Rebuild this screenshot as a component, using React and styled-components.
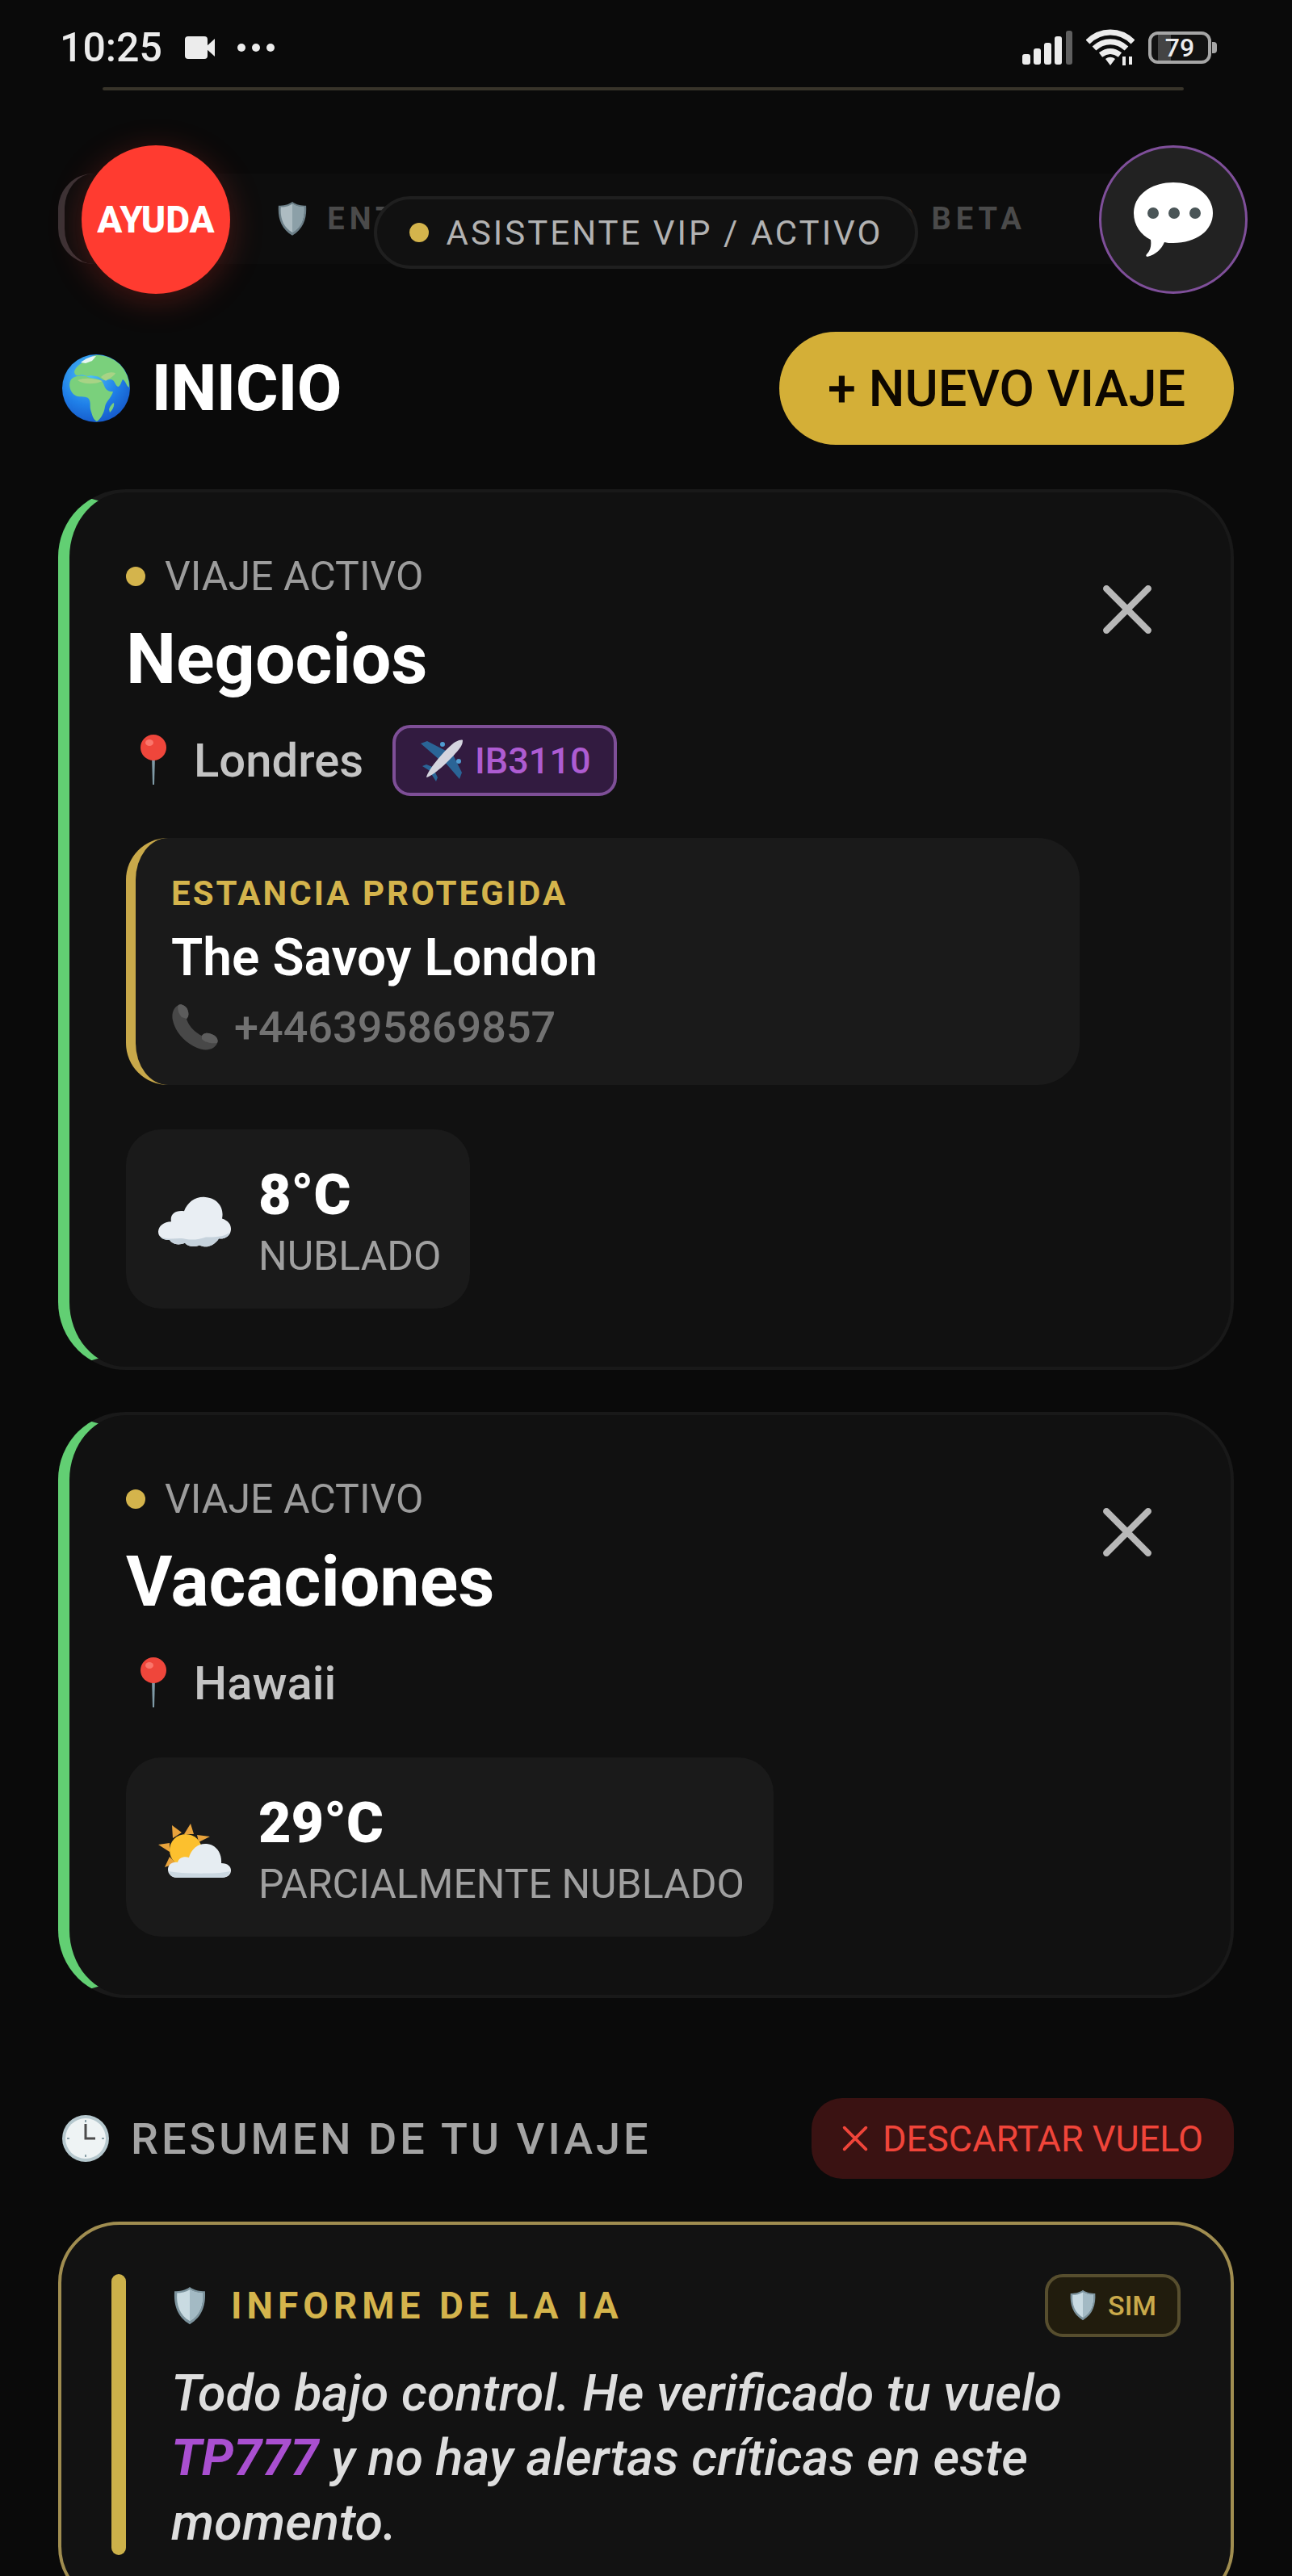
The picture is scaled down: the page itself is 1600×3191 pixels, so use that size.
import React from 'react'
import styled, { createGlobalStyle } from 'styled-components';

const GlobalStyle = createGlobalStyle`
  * {
    box-sizing: border-box;
  }
  body {
    margin: 0;
    background: #0a0a0a;
    color: #ffffff;
    font-family: Roboto, "Liberation Sans", sans-serif;
  }
  button {
    font-family: inherit;
    border: none;
    cursor: pointer;
  }
  h1, h2, h3, p {
    margin: 0;
  }
  svg {
    display: block;
    flex-shrink: 0;
  }
`;

const trips = [
  {
    name: 'Negocios',
    city: 'Londres',
    flight: 'IB3110',
    hotel: { name: 'The Savoy London', phone: '+446395869857' },
    weather: { temp: '8°C', label: 'NUBLADO', sunny: false },
  },
  {
    name: 'Vacaciones',
    city: 'Hawaii',
    weather: { temp: '29°C', label: 'PARCIALMENTE NUBLADO', sunny: true },
  },
];

const Page = styled.div`
  height: 100vh;
  overflow: hidden;
  background: #0a0a0a;
`;

const StatusBar = styled.div`
  display: flex;
  align-items: center;
  justify-content: space-between;
  height: 108px;
  padding: 10px 90px 0 74px;
`;

const StatusGroup = styled.div`
  display: flex;
  align-items: center;
  gap: ${({ $gap }) => $gap}px;
`;

const Clock = styled.span`
  font-size: 50px;
  font-weight: 500;
  line-height: 60px;
  color: #ececec;
`;

const ScrolledEdge = styled.div`
  height: 4px;
  margin: 0 134px 0 127px;
  border-radius: 2px;
  background: #38342a;
`;

const TopZone = styled.div`
  position: relative;
  height: 299px;
  padding: 103px 72px 0;
`;

const Banner = styled.div`
  display: flex;
  align-items: center;
  justify-content: center;
  gap: 24px;
  height: 112px;
  padding-left: 6px;
  border-left: 8px solid #3a3235;
  border-radius: 44px;
  background: #0d0d0d;
  color: #4a4a4a;
  font-size: 38px;
  font-weight: 700;
  letter-spacing: 6px;
  white-space: nowrap;
`;

const FloatingBar = styled.div`
  position: absolute;
  top: 68px;
  left: 0;
  right: 0;
  display: flex;
  justify-content: space-between;
  padding: 0 55px 0 101px;
`;

const HelpButton = styled.button`
  width: 184px;
  height: 184px;
  padding: 0;
  border-radius: 50%;
  background: #ff3b30;
  box-shadow: 0 8px 40px rgba(255, 59, 48, 0.25);
  color: #ffffff;
  font-size: 46px;
  font-weight: 800;
`;

const ChatButton = styled.button`
  display: flex;
  align-items: center;
  justify-content: center;
  width: 184px;
  height: 184px;
  padding: 0;
  && {
    border: 3px solid #7f4f9a;
  }
  border-radius: 50%;
  background: #222222;
`;

const PillLayer = styled.div`
  position: absolute;
  top: 131px;
  left: 0;
  right: 0;
  display: flex;
  justify-content: center;
`;

const StatusPill = styled.div`
  display: flex;
  align-items: center;
  gap: 22px;
  height: 90px;
  padding: 0 40px;
  border: 4px solid #1f1f1f;
  border-radius: 45px;
  background: #111111;
  color: #b2b2b2;
  font-size: 42px;
  letter-spacing: 3px;
  white-space: nowrap;
`;

const Dot = styled.span`
  flex-shrink: 0;
  width: 24px;
  height: 24px;
  border-radius: 50%;
  background: #d4b44c;
`;

const Main = styled.main`
  padding: 0 72px;
`;

const TitleRow = styled.div`
  display: flex;
  align-items: center;
  justify-content: space-between;
  padding-left: 4px;
`;

const PageTitle = styled.h1`
  display: flex;
  align-items: center;
  gap: 26px;
  font-size: 80px;
  font-weight: 800;
  line-height: 96px;
`;

const NewTripButton = styled.button`
  height: 140px;
  padding: 0 60px;
  border-radius: 70px;
  background: #d4af37;
  color: #0d0700;
  font-size: 63px;
  font-weight: 500;
  white-space: nowrap;
`;

const TripList = styled.div`
  display: flex;
  flex-direction: column;
  gap: 52px;
  margin-top: 55px;
`;

const TripCard = styled.article`
  display: flex;
  justify-content: space-between;
  align-items: flex-start;
  padding: 72px 97px 72px 70px;
  border: 4px solid #191919;
  border-left: 14px solid #62cf73;
  border-radius: 84px;
  background: #111111;
`;

const TripBody = styled.div`
  flex: 1;
  min-width: 0;
`;

const TripStatus = styled.div`
  display: flex;
  align-items: center;
  gap: 24px;
  color: #9c9c9c;
  font-size: 50px;
  line-height: 64px;
`;

const TripName = styled.h2`
  margin-top: 14px;
  font-size: 88px;
  font-weight: 700;
  line-height: 112px;
`;

const PlaceRow = styled.div`
  display: flex;
  align-items: center;
  height: 84px;
  margin-top: 28px;
  padding-left: 18px;
`;

const City = styled.span`
  margin: 0 36px 0 34px;
  color: #c4c4c4;
  font-size: 58px;
  font-weight: 500;
`;

const FlightTag = styled.span`
  display: flex;
  align-items: center;
  gap: 14px;
  height: 88px;
  padding: 0 28px 0 30px;
  border: 4px solid #7e4f97;
  border-radius: 22px;
  background: #321b40;
  color: #ae5cd2;
  font-size: 45px;
  font-weight: 500;
`;

const HotelBox = styled.div`
  margin: 54px 28px 5px 0;
  padding: 38px 44px 34px;
  border-left: 12px solid #c9a94a;
  border-radius: 52px;
  background: #1a1a1a;
`;

const HotelLabel = styled.div`
  color: #d4b44c;
  font-size: 42px;
  font-weight: 700;
  letter-spacing: 3px;
  line-height: 62px;
`;

const HotelName = styled.h3`
  font-size: 64px;
  font-weight: 600;
  line-height: 98px;
`;

const HotelPhone = styled.a`
  display: flex;
  align-items: center;
  gap: 20px;
  color: #727272;
  font-size: 54px;
  font-weight: 500;
  line-height: 74px;
  text-decoration: none;
`;

const WeatherBox = styled.div`
  display: inline-flex;
  align-items: center;
  gap: 34px;
  margin-top: 50px;
  padding: 40px 36px 30px 40px;
  border-radius: 44px;
  background: #1a1a1a;
`;

const Temp = styled.div`
  font-size: 70px;
  font-weight: 900;
  line-height: 82px;
`;

const WeatherLabel = styled.div`
  color: #a0a0a0;
  font-size: 50px;
  line-height: 70px;
`;

const CloseButton = styled.button`
  margin-top: 42px;
  padding: 0;
  background: none;
  color: #b8b8b8;
`;

const SectionHead = styled.div`
  display: flex;
  align-items: center;
  justify-content: space-between;
  margin-top: 124px;
  padding-left: 4px;
`;

const SectionTitle = styled.h2`
  display: flex;
  align-items: center;
  gap: 26px;
  color: #a4a4a4;
  font-size: 54px;
  font-weight: 500;
  letter-spacing: 4px;
`;

const DiscardButton = styled.button`
  display: flex;
  align-items: center;
  gap: 18px;
  height: 100px;
  padding: 0 38px;
  border-radius: 38px;
  background: #3a1212;
  color: #f0453a;
  font-size: 45px;
`;

const Report = styled.section`
  display: flex;
  gap: 56px;
  margin-top: 53px;
  padding: 61px 62px;
  border: 4px solid #a08d50;
  border-radius: 76px;
  background: #121212;
`;

const ReportBar = styled.div`
  flex-shrink: 0;
  width: 18px;
  border-radius: 9px;
  background: #ccb14a;
`;

const ReportBody = styled.div`
  flex: 1;
`;

const ReportHead = styled.div`
  display: flex;
  align-items: center;
  justify-content: space-between;
  height: 78px;
`;

const ReportTitle = styled.h3`
  display: flex;
  align-items: center;
  gap: 30px;
  padding-left: 2px;
  color: #d4b44c;
  font-size: 46px;
  font-weight: 700;
  letter-spacing: 6px;
`;

const SimBadge = styled.span`
  display: flex;
  align-items: center;
  gap: 14px;
  height: 78px;
  padding: 0 26px;
  border: 4px solid #574e2e;
  border-radius: 22px;
  background: #211c0d;
  color: #c9a94a;
  font-size: 34px;
  font-weight: 500;
`;

const ReportText = styled.p`
  margin-top: 30px;
  color: #dedede;
  font-size: 63px;
  font-style: italic;
  font-weight: 500;
  line-height: 80px;
`;

const FlightCode = styled.strong`
  color: #a94fd0;
  font-weight: 700;
`;

const VideoIcon = () => (
  <svg width="37" height="28" viewBox="0 0 37 28" fill="#ececec">
    <rect width="28" height="28" rx="4" />
    <path d="M26 13 37 3v22L26 15z" />
  </svg>
);

const MoreIcon = () => (
  <svg width="46" height="10" viewBox="0 0 46 10" fill="#ececec">
    <circle cx="5" cy="5" r="5" />
    <circle cx="23" cy="5" r="5" />
    <circle cx="41" cy="5" r="5" />
  </svg>
);

const SignalIcon = () => (
  <svg width="62" height="42" viewBox="0 0 62 42" fill="#ececec">
    <rect x="0" y="29" width="10" height="13" rx="3" />
    <rect x="14" y="22" width="9" height="20" rx="3" />
    <rect x="27" y="15" width="9" height="27" rx="3" />
    <rect x="40" y="7" width="9" height="35" rx="3" />
    <rect x="54" y="0" width="8" height="42" rx="3" fill="#5f5f5f" />
  </svg>
);

const WifiIcon = () => (
  <svg width="60" height="48" viewBox="0 0 60 48" fill="none" stroke="#ececec" strokeWidth="7">
    <path d="M2 17C18 1 42 1 58 17" />
    <path d="M10 25C22 14 38 14 50 25" />
    <path d="M18 33c8-6 16-6 24 0" />
    <path d="M24 38c4-3 8-3 12 0l-6 8z" fill="#ececec" stroke="none" />
    <path d="M47 35v11M55 35v10" strokeWidth="4" />
  </svg>
);

const Battery = styled.div`
  position: relative;
  width: 78px;
  height: 40px;
  margin-right: 10px;
  border: 4px solid #a6a6a6;
  border-radius: 12px;
  background: linear-gradient(90deg, #111111 8px, #444444 8px, #444444 24px, #111111 24px);
  color: #ececec;
  font-size: 32px;
  font-weight: 500;
  line-height: 32px;
  text-align: center;
  &::after {
    content: '';
    position: absolute;
    top: 9px;
    right: -11px;
    width: 6px;
    height: 14px;
    border-radius: 0 4px 4px 0;
    background: #a6a6a6;
  }
`;

const ShieldIcon = ({ size, dim }) => (
  <svg width={size} height={size * 1.15} viewBox="0 0 40 46" opacity={dim ? 0.85 : 1}>
    <path d="M20 1c5 4 12 5 18 5 1 16-3 30-18 39C5 36 1 22 2 6 8 6 15 5 20 1z" fill="#7d949e" />
    <path d="M20 4c5 3 10 4 15 4 1 14-3 26-15 33C8 34 4 22 5 8c5 0 10-1 15-4z" fill="#c9dbe2" />
    <path d="M20 4c5 3 10 4 15 4 1 14-3 26-15 33z" fill="#a3bac4" />
  </svg>
);

const ChatIcon = () => (
  <svg width="104" height="96" viewBox="0 0 104 96">
    <path
      d="M52 2c28 0 49 16 49 38S80 77 52 77c-4 0-8 0-11-1-4 9-10 15-21 18-2 0-2-2-1-3 5-5 6-11 5-18C12 67 3 55 3 40 3 18 24 2 52 2z"
      fill="#ffffff"
    />
    <circle cx="27" cy="40" r="7" fill="#4a5557" />
    <circle cx="53" cy="40" r="7" fill="#4a5557" />
    <circle cx="79" cy="40" r="7" fill="#4a5557" />
  </svg>
);

const GlobeIcon = () => (
  <svg width="86" height="86" viewBox="0 0 86 86">
    <defs>
      <radialGradient id="sea" cx="0.4" cy="0.3" r="0.75">
        <stop offset="0" stopColor="#4fc3f7" />
        <stop offset="0.6" stopColor="#1f7fe8" />
        <stop offset="1" stopColor="#1557c8" />
      </radialGradient>
      <clipPath id="globe">
        <circle cx="43" cy="43" r="42" />
      </clipPath>
    </defs>
    <circle cx="43" cy="43" r="42" fill="url(#sea)" />
    <g clipPath="url(#globe)" fill="#7ad07c">
      <path d="M12 32c5-5 12-5 19-4 4 3 10 2 15 4 5 1 6 5 8 10 3 5 7 5 10 5-2 8-9 12-10 19-1 7-5 15-10 18-5-2-6-9-8-15-1-5 1-10-3-14-4-3-12 0-17-4-5-4-8-12-4-19z" />
      <path d="M16 22c2-6 8-9 12-13 6 0 8-6 15-7 14-1 31 8 37 22 3 5 4 12 4 18-4-2-4-8-8-10-2 3-3 9-6 9-4-2-3-8-9-9-4 0-7 3-12-1-4-4-9-3-13-4-5 3-9-3-14 0-3 1-6-1-6-5z" />
      <path d="M59 69c1-4 4-7 6-8 1 4-2 9-5 12z" />
    </g>
    <path d="M24 11c6-5 13-8 19-8l-5 6-8 3z" fill="#e8f6f2" />
    <path d="M20 33c10-4 22-2 31 1-8 4-23 5-31-1z" fill="#c7d58c" opacity="0.6" />
    <path d="M49 29c5-5 11-7 18-5-2 5-8 6-12 10z" fill="#c7d58c" opacity="0.6" />
  </svg>
);

const PinIcon = () => (
  <svg width="32" height="64" viewBox="0 0 32 64">
    <path d="M14 26h4l-1 36h-2z" fill="#7f9aa6" />
    <circle cx="16" cy="16" r="16" fill="#ef463b" />
    <ellipse cx="11" cy="10" rx="5" ry="4" fill="#ff8a80" opacity="0.7" />
  </svg>
);

const PlaneIcon = () => (
  <svg width="54" height="54" viewBox="0 0 54 54">
    <path d="M1 6 9 3l25 13-11 9zM49 50l3-8-13-26-9 12z" fill="#2a6496" />
    <path d="M3 34l5-2 10 4-4 5zM20 53l2-5-5-10-4 4z" fill="#2a6496" />
    <circle cx="28" cy="7" r="3" fill="#4f9bd0" />
    <circle cx="48" cy="28" r="3" fill="#4f9bd0" />
    <path d="M8 48C10 38 34 10 44 4c5-3 9-3 9-2s0 5-3 9C42 22 18 46 8 48z" fill="#d4d4de" />
  </svg>
);

const PhoneIcon = () => (
  <svg width="58" height="58" viewBox="0 0 58 58">
    <path
      d="M9 1c3-2 9 1 11 5 2 5 2 9-1 12 2 8 10 17 19 21 3-4 7-4 12-2 6 2 9 7 7 11-3 8-14 11-25 6C17 48 5 34 2 20 0 12 3 4 9 1z"
      fill="#484848"
    />
    <path d="M9 1c3-2 9 1 11 5 2 5 2 9-1 12l-6-2C9 12 7 5 9 1z" fill="#5c5c5c" />
    <path d="M38 39c3-4 7-4 12-2 6 2 9 7 7 11-5 1-15 0-19-5z" fill="#5c5c5c" />
  </svg>
);

const CloudIcon = () => (
  <svg width="90" height="66" viewBox="0 0 90 72" preserveAspectRatio="none">
    <path
      d="M16 34c-2-10 6-16 16-14C36 8 46 0 58 1c15 1 24 14 21 29 8 3 11 8 11 14 0 9-7 14-15 13-5 9-15 14-24 9-7 3-14 2-18-3-9 4-16 1-19-4C5 59 0 54 0 48c0-8 7-14 16-14z"
      fill="#e9eef3"
    />
    <path
      d="M3 55c9 4 20 1 28 2 10 3 20 1 28-2 10 0 22 0 29-6-1 6-7 9-13 8-5 9-15 14-24 9-7 3-14 2-18-3-9 4-16 1-19-4-5 0-9-1-11-4z"
      fill="#c6d2dc"
    />
  </svg>
);

const SunCloudIcon = () => (
  <svg width="90" height="68" viewBox="0 0 90 68">
    <path
      d="m17 2 12 9-11 7zM40 0l4 13H32zM64 16l-14 7-2-9zM0 26l14-2v11zM8 54l6-13 8 8z"
      fill="#e8a33c"
    />
    <circle cx="34" cy="33" r="20" fill="#fcc02e" />
    <path
      d="M24 67c-8 0-12-5-12-10 0-6 5-10 12-9 1-5 7-8 14-6 3-11 12-18 22-17 12 1 19 12 18 24 8 0 12 4 12 9s-4 9-12 9z"
      fill="#e6edf2"
    />
    <path d="M13 59c12 3 62 4 76 0-1 5-5 8-11 8H24c-6 0-10-3-11-8z" fill="#cbd8e1" />
  </svg>
);

const ClockIcon = () => (
  <svg width="60" height="60" viewBox="0 0 60 60">
    <circle cx="30" cy="30" r="29" fill="#b6c8ce" />
    <circle cx="30" cy="30" r="25" fill="#eef3f4" />
    <path d="M30 12v18h12" fill="none" stroke="#4b4b4b" strokeWidth="3" />
    <path d="M30 7v3M30 50v3M7 30h3M50 30h3" stroke="#8aa0a8" strokeWidth="2" />
  </svg>
);

const CrossIcon = ({ size, weight }) => (
  <svg
    width={size}
    height={size}
    viewBox="0 0 60 60"
    stroke="currentColor"
    strokeWidth={weight}
    strokeLinecap="round"
  >
    <path d="M5 5l50 50M55 5 5 55" />
  </svg>
);

const Trip = ({ trip }) => {
  const { name, city, flight, hotel, weather } = trip;
  return (
    <TripCard>
      <TripBody>
        <TripStatus><Dot />VIAJE ACTIVO</TripStatus>
        <TripName>{name}</TripName>
        <PlaceRow>
          <PinIcon />
          <City>{city}</City>
          {flight && <FlightTag><PlaneIcon />{flight}</FlightTag>}
        </PlaceRow>
        {hotel &&
          <HotelBox>
            <HotelLabel>ESTANCIA PROTEGIDA</HotelLabel>
            <HotelName>{hotel.name}</HotelName>
            <HotelPhone href={`tel:${hotel.phone}`}><PhoneIcon />{hotel.phone}</HotelPhone>
          </HotelBox>
        }
        <WeatherBox>
          {weather.sunny ? <SunCloudIcon /> : <CloudIcon />}
          <div>
            <Temp>{weather.temp}</Temp>
            <WeatherLabel>{weather.label}</WeatherLabel>
          </div>
        </WeatherBox>
      </TripBody>
      <CloseButton aria-label={`Cerrar ${name}`}><CrossIcon size={62} weight={8} /></CloseButton>
    </TripCard>
  )
}

const App = () => {
  return (
    <Page>
      <GlobalStyle />
      <StatusBar>
        <StatusGroup $gap={28}>
          <Clock>10:25</Clock>
          <VideoIcon />
          <MoreIcon />
        </StatusGroup>
        <StatusGroup $gap={17}>
          <SignalIcon />
          <WifiIcon />
          <Battery>79</Battery>
        </StatusGroup>
      </StatusBar>
      <ScrolledEdge />
      <TopZone>
        <Banner>
          <ShieldIcon size={38} dim />
          ENTORNO DE PRUEBAS PRIVADO BETA
        </Banner>
        <FloatingBar>
          <HelpButton>AYUDA</HelpButton>
          <ChatButton aria-label="Chat"><ChatIcon /></ChatButton>
        </FloatingBar>
        <PillLayer>
          <StatusPill><Dot />ASISTENTE VIP / ACTIVO</StatusPill>
        </PillLayer>
      </TopZone>
      <Main>
        <TitleRow>
          <PageTitle><GlobeIcon />INICIO</PageTitle>
          <NewTripButton>+ NUEVO VIAJE</NewTripButton>
        </TitleRow>
        <TripList>
          {trips.map((trip) => (
            <Trip key={trip.name} trip={trip} />
          ))}
        </TripList>
        <SectionHead>
          <SectionTitle><ClockIcon />RESUMEN DE TU VIAJE</SectionTitle>
          <DiscardButton><CrossIcon size={32} weight={7} />DESCARTAR VUELO</DiscardButton>
        </SectionHead>
        <Report>
          <ReportBar />
          <ReportBody>
            <ReportHead>
              <ReportTitle><ShieldIcon size={42} />INFORME DE LA IA</ReportTitle>
              <SimBadge><ShieldIcon size={34} />SIM</SimBadge>
            </ReportHead>
            <ReportText>
              Todo bajo control. He verificado tu vuelo <FlightCode>TP777</FlightCode> y no hay
              alertas críticas en este momento.
            </ReportText>
          </ReportBody>
        </Report>
      </Main>
    </Page>
  )
}

export default App
